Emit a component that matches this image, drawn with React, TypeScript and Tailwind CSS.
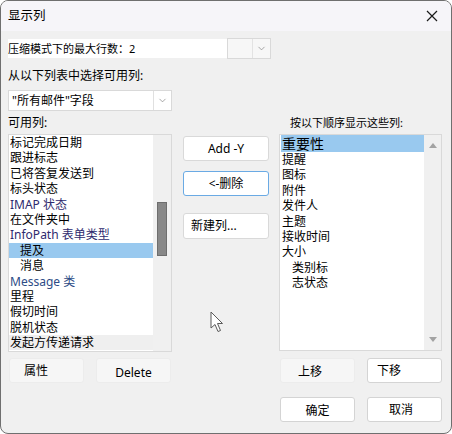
import React from 'react';
import { ChevronDown } from 'lucide-react';

type Item = {
  label: string;
  indent?: boolean;
  selected?: boolean;
  color?: string;
  muted?: boolean;
  big?: boolean;
};

const availableColumns: Item[] = [
  { label: '标记完成日期' },
  { label: '跟进标志' },
  { label: '已将答复发送到' },
  { label: '标头状态' },
  { label: 'IMAP 状态', color: 'text-[#2e2a6e]' },
  { label: '在文件夹中' },
  { label: 'InfoPath 表单类型', color: 'text-[#2e2a6e]' },
  { label: '提及', indent: true, selected: true },
  { label: '消息', indent: true },
  { label: 'Message 类', color: 'text-[#2d4c86]' },
  { label: '里程' },
  { label: '假切时间' },
  { label: '脱机状态' },
  { label: '发起方传递请求', muted: true },
];

const shownColumns: Item[] = [
  { label: '重要性', selected: true, big: true },
  { label: '提醒' },
  { label: '图标' },
  { label: '附件' },
  { label: '发件人' },
  { label: '主题' },
  { label: '接收时间' },
  { label: '大小' },
  { label: '类别标', indent: true },
  { label: '志状态', indent: true },
];

const ListRow = ({ item }: { item: Item }) => (
  <div
    className={`whitespace-nowrap ${item.big ? 'h-[17px] text-[14px] leading-[17px]' : 'h-[15.4px] text-[12px] leading-[15.4px]'} ${
      item.indent ? 'pl-[11px]' : 'pl-[1px]'
    } ${item.selected ? 'bg-[#99c9ef]' : item.muted ? 'bg-[#efefef]' : ''} ${item.color ?? 'text-black'}`}
  >
    {item.label}
  </div>
);

// 회색 직사각형 버튼 (대화상자 스타일)
const DlgButton = ({
  children,
  className = '',
}: {
  children: React.ReactNode;
  className?: string;
}) => (
  <button
    type="button"
    className={`flex h-[25px] w-[75px] items-center rounded-[3px] border text-[12px] leading-none text-black ${className}`}
  >
    {children}
  </button>
);

const Cursor = () => (
  <svg width="15" height="23" viewBox="0 0 15 23" className="absolute left-[209px] top-[310px]">
    <path
      d="M1 1 L1 17 L5 13.5 L8 20.5 L10.5 19.5 L7.5 12.5 L12.5 12.5 Z"
      fill="#ffffff"
      stroke="#5a5a5a"
      strokeWidth="1"
      strokeLinejoin="round"
    />
  </svg>
);

export default function App() {
  return (
    <div className="relative h-[434px] w-[452px] overflow-hidden rounded-[8px] border border-[#6f6f6f] bg-[#f0f0f0] font-['Noto_Sans','Noto_Sans_CJK_SC',sans-serif] text-black">
      {/* 제목 표시줄 */}
      <div className="flex h-[30px] items-center justify-between bg-[#f6f5f9] pl-[7px] pr-[13px]">
        <span className="text-[12.5px] leading-none">显示列</span>
        <svg width="12" height="12" viewBox="0 0 12 12">
          <path d="M1 1 L11 11 M11 1 L1 11" stroke="#1a1a1a" strokeWidth="1.2" />
        </svg>
      </div>

      <div className="px-[7px]">
        {/* 최대 행 수 */}
        <div className="mt-[7px] flex h-[21px] items-center">
          <div className="flex h-[19px] w-[219px] items-center bg-white text-[11px] leading-none">
            压缩模式下的最大行数：2
          </div>
          <div className="flex h-[21px] w-[44px] border border-[#d9d9d9] bg-[#f7f7f7]">
            <div className="w-[24px]" />
            <div className="flex flex-1 items-center justify-center border-l border-[#e3e3e3]">
              <ChevronDown size={11} strokeWidth={1.5} color="#808080" />
            </div>
          </div>
        </div>

        <div className="mt-[9px] h-[16px] text-[12px] leading-[16px]">从以下列表中选择可用列:</div>

        <div className="mt-[6px] flex h-[21px] w-[164px] border border-[#d9d9d9] bg-white">
          <div className="flex flex-1 items-center pl-[3px] text-[12px] leading-none">"所有邮件"字段</div>
          <div className="flex w-[18px] items-center justify-center border-l border-[#e0e0e0]">
            <ChevronDown size={11} strokeWidth={1.5} color="#808080" />
          </div>
        </div>

        <div className="flex">
          {/* 사용 가능한 열 */}
          <div className="flex w-[164px] flex-col">
            <div className="mt-[4px] h-[16px] text-[12px] leading-[16px]">可用列:</div>
            <div className="mt-[3px] flex h-[218px] border border-[#d9d9d9] bg-white">
              <div className="flex-1 overflow-hidden">
                {availableColumns.map((item) => (
                  <ListRow key={item.label} item={item} />
                ))}
              </div>
              <div className="w-[18px] bg-[#f0f0f0] pt-[67px]">
                <div className="mx-auto h-[54px] w-[10px] border border-[#6e6e6e] bg-[#888888]" />
              </div>
            </div>
            <div className="mt-[6px] flex gap-[12px] pl-[1px]">
              <DlgButton className="border-[#ececec] bg-[#f6f6f6] pl-[14px]">属性</DlgButton>
              <DlgButton className="justify-center border-[#ececec] bg-[#f6f6f6] pt-[5px]">Delete</DlgButton>
            </div>
          </div>

          {/* 가운데 버튼 */}
          <div className="ml-[11px] flex w-[86px] flex-col pt-[25px]">
            <button type="button" className="h-[25px] rounded-[3px] border border-[#d9d9d9] bg-white text-[12px] leading-none">
              Add -Y
            </button>
            <button type="button" className="mt-[10px] h-[25px] rounded-[3px] border border-[#6aaae4] bg-white text-[12px] leading-none">
              &lt;-删除
            </button>
            <button type="button" className="mt-[17px] h-[26px] rounded-[3px] border border-[#d9d9d9] bg-white pl-[7px] text-left text-[12px] leading-none">
              新建列...
            </button>
          </div>

          {/* 표시 순서 */}
          <div className="ml-[10px] flex w-[163px] flex-col">
            <div className="mt-[4px] h-[16px] pl-[11px] text-[11px] leading-[16px]">按以下顺序显示这些列:</div>
            <div className="mt-[3px] flex h-[217px] border border-[#d9d9d9] bg-white">
              <div className="flex-1 overflow-hidden pl-[1px]">
                {shownColumns.map((item) => (
                  <ListRow key={item.label} item={item} />
                ))}
              </div>
              <div className="flex w-[17px] flex-col items-center justify-between bg-[#f0f0f0] py-[8px]">
                <svg width="8" height="5" viewBox="0 0 8 5">
                  <path d="M0 5 L4 0 L8 5 Z" fill="#a3a3a3" />
                </svg>
                <svg width="8" height="5" viewBox="0 0 8 5">
                  <path d="M0 0 L4 5 L8 0 Z" fill="#a3a3a3" />
                </svg>
              </div>
            </div>
            <div className="mt-[7px] flex gap-[12px] pl-[1px]">
              <DlgButton className="border-[#ececec] bg-[#f6f6f6] pl-[17px] pt-[2px]">上移</DlgButton>
              <DlgButton className="border-[#d4d4d4] bg-white pl-[9px]">下移</DlgButton>
            </div>
            <div className="mt-[14px] flex gap-[12px] pl-[1px]">
              <DlgButton className="justify-center border-[#d4d4d4] bg-white pt-[2px]">确定</DlgButton>
              <DlgButton className="border-[#d4d4d4] bg-white pl-[21px]">取消</DlgButton>
            </div>
          </div>
        </div>
      </div>

      <Cursor />
    </div>
  );
}
